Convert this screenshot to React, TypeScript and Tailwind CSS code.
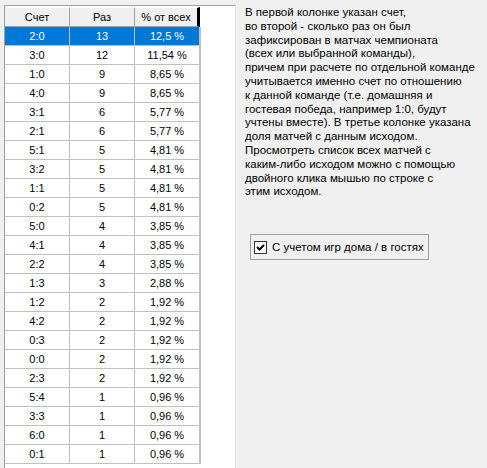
import React from "react";

const rows: [string, string, string][] = [
  ["2:0", "13", "12,5 %"],
  ["3:0", "12", "11,54 %"],
  ["1:0", "9", "8,65 %"],
  ["4:0", "9", "8,65 %"],
  ["3:1", "6", "5,77 %"],
  ["2:1", "6", "5,77 %"],
  ["5:1", "5", "4,81 %"],
  ["3:2", "5", "4,81 %"],
  ["1:1", "5", "4,81 %"],
  ["0:2", "5", "4,81 %"],
  ["5:0", "4", "3,85 %"],
  ["4:1", "4", "3,85 %"],
  ["2:2", "4", "3,85 %"],
  ["1:3", "3", "2,88 %"],
  ["1:2", "2", "1,92 %"],
  ["4:2", "2", "1,92 %"],
  ["0:3", "2", "1,92 %"],
  ["0:0", "2", "1,92 %"],
  ["2:3", "2", "1,92 %"],
  ["5:4", "1", "0,96 %"],
  ["3:3", "1", "0,96 %"],
  ["6:0", "1", "0,96 %"],
  ["0:1", "1", "0,96 %"],
];

const lines = [
  "В первой колонке указан счет,",
  "во второй - сколько раз он был",
  "зафиксирован в матчах чемпионата",
  "(всех или выбранной команды),",
  "причем при расчете по отдельной команде",
  "учитывается именно счет по отношению",
  "к данной команде (т.е. домашняя и",
  "гостевая победа, например 1:0, будут",
  "учтены вместе). В третье колонке указана",
  "доля матчей с данным исходом.",
  "Просмотреть список всех матчей с",
  "каким-либо исходом можно с помощью",
  "двойного клика мышью по строке с",
  "этим исходом.",
];

export default function App() {
  return (
    <div className="flex w-[487px] h-[468px] overflow-hidden bg-[#f0f0f0] font-['Liberation_Sans',Arial,sans-serif] text-[11px] text-black">
      {/* Grid */}
      <div className="ml-[4px] mt-[5px] w-[232px] shrink-0 bg-white border-t border-l border-[#a0a0a0] border-r border-r-[#e3e3e3] pt-[1px]">
        <div className="flex h-[20px]">
          {["Счет", "Раз"].map((h) => (
            <div
              key={h}
              className="w-[65px] flex items-center justify-center bg-[#f0f0f0] border-t border-t-white border-r border-r-[#a0a0a0] border-b border-b-[#a0a0a0]"
            >
              {h}
            </div>
          ))}
          <div className="w-[65px] flex items-center justify-center bg-[#f0f0f0] border-t border-t-white border-r-[3px] border-r-black border-b border-b-[#a0a0a0]">
            % от всех
          </div>
        </div>
        {rows.map((r, i) => {
          const sel = i === 0;
          return (
            <div key={i} className="flex h-[19px]">
              {r.map((c, j) => (
                <div
                  key={j}
                  className={`w-[65px] flex items-center justify-center border-b border-[#c0c0c0] ${
                    j === 2 ? "border-r-[2px] w-[66px]" : "border-r"
                  } ${sel ? "bg-[#0078d7] text-white" : ""}`}
                >
                  {c}
                </div>
              ))}
            </div>
          );
        })}
      </div>

      {/* Description */}
      <div className="flex flex-col pl-[9px] pt-[6px] text-[11.5px]">
        <div className="leading-[13.8px]">
          {lines.map((l, i) => (
            <div key={i} className="whitespace-nowrap">
              {l}
            </div>
          ))}
        </div>
        <div className="mt-[35px] ml-[5px] w-[179px] h-[26px] border border-[#a0a0a0] flex items-center pl-[3px]">
          <span className="w-[13px] h-[13px] border border-[#333] bg-white flex items-center justify-center">
            <svg width="9" height="9" viewBox="0 0 9 9">
              <path d="M1 4 L3.5 6.5 L8 2" stroke="black" strokeWidth="2" fill="none" />
            </svg>
          </span>
          <span className="ml-[5px]">С учетом игр дома / в гостях</span>
        </div>
      </div>
    </div>
  );
}
